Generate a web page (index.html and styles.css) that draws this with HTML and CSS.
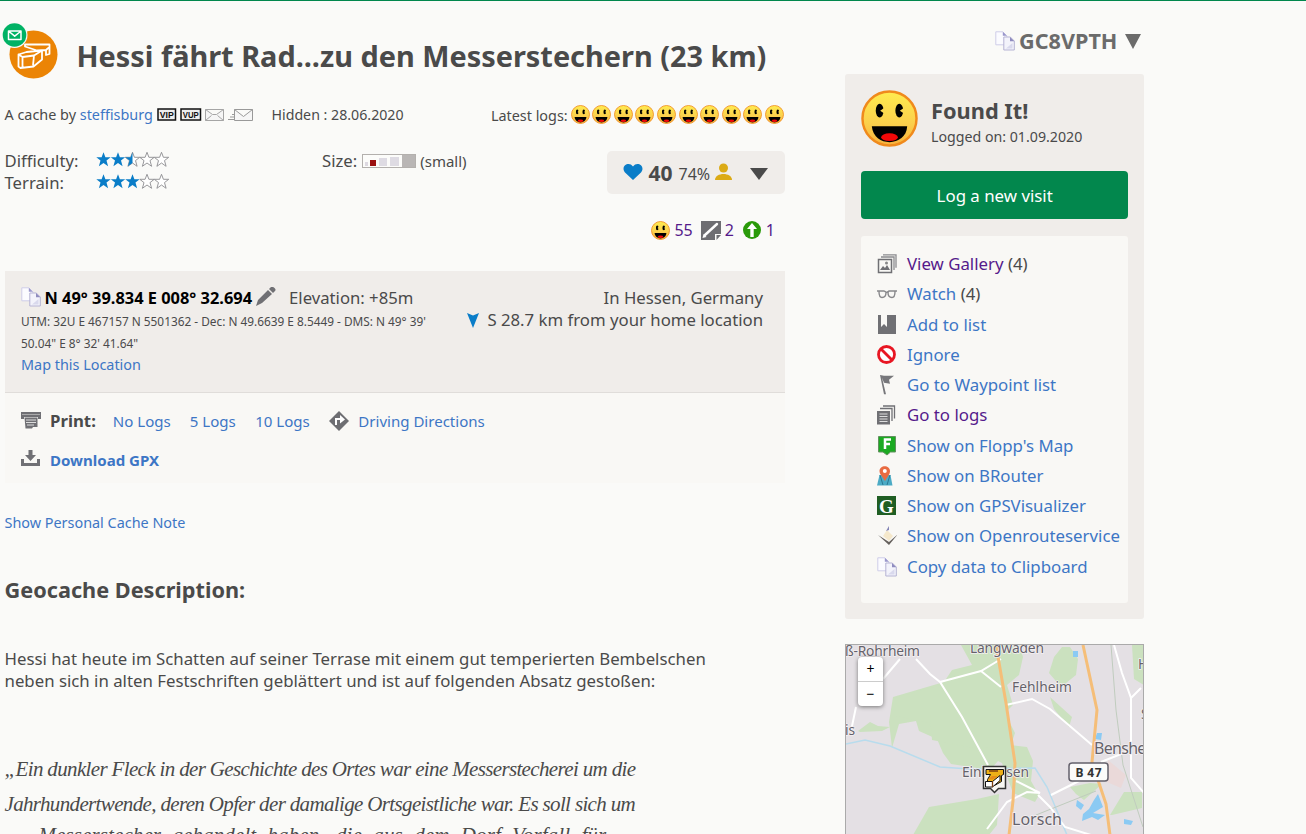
FILE: index.html
```html
<!DOCTYPE html>
<html lang="en">
<head>
<meta charset="utf-8">
<title>Geocache GC8VPTH</title>
<link rel="stylesheet" href="styles.css">
</head>
<body>
<svg class="defs" width="0" height="0">
  <defs>
    <linearGradient id="face" x2="0" y2="1"><stop offset="0" stop-color="#ffec4f"/><stop offset=".6" stop-color="#fbcf4c"/><stop offset="1" stop-color="#f9b23c"/></linearGradient>
    <symbol id="smile" viewBox="0 0 58 58"><circle cx="29" cy="29" r="27.5" fill="url(#face)" stroke="#f08a1c" stroke-width="2.5"/><ellipse cx="19" cy="21" rx="4" ry="7"/><ellipse cx="39" cy="21" rx="4" ry="7"/><path d="M19.500 21l5-3.500v7zM39.500 21l5-3.500v7z" fill="#fcd950"/><path d="M11 37h36c-1 21-34 22-36 0z"/><ellipse cx="29" cy="48" rx="8.500" ry="4" fill="#f20808"/></symbol>
    <symbol id="star" viewBox="0 0 15 15"><path d="M7.500 .3l1.900 5h5.300l-4.200 3.300 1.600 5.700-4.600-3.300-4.600 3.300 1.600-5.700L.3 5.300h5.300z"/></symbol>
    <symbol id="copy" viewBox="0 0 20 20"><path d="M.8.8h7l4 4v9h-11z" fill="#fbfbff" stroke="#cfcee8"/><path d="M7.800.8v4h4z" fill="#9a97cb"/><path d="M8.800 6h6.500l4 4v9H8.800z" fill="#f3f3fb" stroke="#b5b3d3"/><path d="M15 6v4.300h4.300z" fill="#8f8cbf"/><path d="M11 17.500h6.500V12z" fill="#d9d9ed"/></symbol>
  </defs>
</svg>
<div class="page">
<main class="main">
  <header class="head">
    <svg class="type-icon" width="58" height="58" viewBox="0 0 58 58">
      <circle cx="33.500" cy="31.500" r="24" fill="#eb8405"/>
      <path d="M18.500 31.500l4 2.500 11.500-1.500 8-5v9l-8.500 7-13 1.500-2-1.500zM22.500 34v10M34 32.500l-1 10M18.500 31.500l8-2.500 15.500-1.500M25 21.500h24.500v9.500l-3.500 1v-5l-9 .500-12-4zM46 27l3.500-3" fill="none" stroke="#fff" stroke-width="1.800" stroke-linejoin="round"/>
      <circle cx="14.500" cy="12" r="13" fill="#fafaf8"/><circle cx="14.500" cy="12" r="11.800" fill="#00b265"/>
      <path d="M8.500 8h12.500v8.500H8.500zM9 8.500l5.700 4.700L20.500 8.500" fill="none" stroke="#fff" stroke-width="1.500" stroke-linejoin="round"/>
    </svg>
    <h1>Hessi fährt Rad...zu den Messerstechern (23 km)</h1>
  </header>
  <div class="byline">
    <span class="by">A cache by <a>steffisburg</a></span>
    <svg class="mails" width="97" height="14" viewBox="0 0 97 14">
      <rect x="1" y="1" width="17.500" height="11" fill="#eee" stroke="#111" stroke-width="1.500"/>
      <text x="9.700" y="10" class="vip" textLength="14" lengthAdjust="spacingAndGlyphs">VIP</text>
      <rect x="24" y="1" width="19.500" height="11" fill="#eee" stroke="#111" stroke-width="1.500"/>
      <text x="33.700" y="10" class="vip" textLength="16" lengthAdjust="spacingAndGlyphs">VUP</text>
      <path d="M48.500 1.500h18v11h-18zl7 5h4l7-5M48.500 12.500l6-5M66.500 12.500l-6-5" fill="#f6f6f6" stroke="#a5a5a5"/>
      <path d="M77.500 1.500h18v11h-18zl9 7 9-7" fill="#f6f6f6" stroke="#999"/><path d="M75 6.500h3M73 9h5M71 11.500h6" stroke="#999"/>
    </svg>
    <span class="hidden-on">Hidden : 28.06.2020</span>
    <span class="latest">Latest logs:</span>
    <span class="smiles">
      <svg><use href="#smile"/></svg><svg><use href="#smile"/></svg><svg><use href="#smile"/></svg><svg><use href="#smile"/></svg><svg><use href="#smile"/></svg><svg><use href="#smile"/></svg><svg><use href="#smile"/></svg><svg><use href="#smile"/></svg><svg><use href="#smile"/></svg><svg><use href="#smile"/></svg>
    </span>
  </div>
  <div class="facts">
    <dl class="ratings">
      <dt>Difficulty:</dt>
      <dd><svg width="73" height="15" viewBox="0 0 73 15"><g class="on"><use href="#star" width="15" height="15"/><use href="#star" x="14.500" width="15" height="15"/></g><use class="off" href="#star" x="29" width="15" height="15"/><path class="on" d="M36.500.3v10.700l-4.600 3.300 1.600-5.700-4.200-3.300h5.300z"/><g class="off"><use href="#star" x="43.500" width="15" height="15"/><use href="#star" x="58" width="15" height="15"/></g></svg></dd>
      <dt>Terrain:</dt>
      <dd><svg width="73" height="15" viewBox="0 0 73 15"><g class="on"><use href="#star" width="15" height="15"/><use href="#star" x="14.500" width="15" height="15"/><use href="#star" x="29" width="15" height="15"/></g><g class="off"><use href="#star" x="43.500" width="15" height="15"/><use href="#star" x="58" width="15" height="15"/></g></svg></dd>
    </dl>
    <div class="size"><span>Size:</span>
      <svg width="54" height="14" viewBox="0 0 54 14"><rect x=".5" y=".5" width="53" height="13" fill="#fcfcfa" stroke="#b3b0ad"/><rect x="3" y="8" width="3" height="4" fill="#ddd9e1"/><rect x="8" y="6" width="6" height="6" fill="#9b1010"/><rect x="17" y="4" width="8" height="8" fill="#dedbe3"/><rect x="28" y="3" width="9" height="9" fill="#dedbe3"/><rect x="40" y="1" width="13" height="12" fill="#b9b6b5"/></svg>
      <span class="small">(small)</span></div>
    <div class="fav">
      <svg class="heart" width="20" height="18" viewBox="0 0 20 18"><path d="M10 17L2 9.500C-3 3 6-2.500 10 3.500 14-2.500 23 3 18 9.500z" fill="#0a7dc8"/></svg>
      <b>40</b><span class="pct">74%</span>
      <svg class="person" width="17" height="18" viewBox="0 0 17 18"><circle cx="8.500" cy="5" r="4.500" fill="#dcab16"/><path d="M0 17c0-8 17-8 17 0z" fill="#dcab16"/></svg>
      <svg class="arrow" width="18" height="12" viewBox="0 0 18 12"><path d="M0 0h18l-9 12z" fill="#4a4a4a"/></svg>
    </div>
  </div>
  <div class="counts">
    <svg width="19" height="19"><use href="#smile"/></svg><a>55</a>
    <svg class="note" width="20" height="19" viewBox="0 0 20 19"><path d="M0 0h20v13h-6v6H0z" fill="#6e6e72"/><path d="M4 14L16 3" stroke="#fff" stroke-width="2.400" stroke-linecap="round"/><path d="M1.500 17l1-4 3 3z" fill="#fff"/><path d="M15.500 14H20l-4.500 5z" fill="#6e6e72"/></svg><a>2</a>
    <svg class="up" width="18" height="18" viewBox="0 0 18 18"><circle cx="9" cy="9" r="9" fill="#2a9a0a"/><path d="M9 2l5 6h-3.300v8H7.300V8H4z" fill="#fff"/></svg><a>1</a>
  </div>

  <section class="coords">
    <div class="coords-left">
      <div class="coord-line"><svg width="20" height="20"><use href="#copy"/></svg><b>N 49° 39.834 E 008° 32.694</b>
        <svg class="pencil" width="20" height="19" viewBox="0 0 20 19"><path d="M0 19l2-6L12 3l4 4L6 16zM13 2l2-2c2-1 6 2 4 4l-2 2z" fill="#707074"/></svg>
        <span class="elev">Elevation: +85m</span></div>
      <p class="utm">UTM: 32U E 467157 N 5501362 - Dec: N 49.6639 E 8.5449 - DMS: N 49° 39'<br>50.04" E 8° 32' 41.64"</p>
      <a class="maplink">Map this Location</a>
    </div>
    <div class="coords-right"><p>In Hessen, Germany</p><p><svg width="12" height="16" viewBox="0 0 12 16"><path d="M0 1l6 2.500L12 1 6 16z" fill="#0a7dc8"/></svg>S 28.7 km from your home location</p></div>
  </section>
  <section class="print">
    <div class="print-row">
      <svg class="ic" width="20" height="17" viewBox="0 0 20 17"><path d="M0 0h20v7h-3V5H3v2H0z" fill="#707074"/><path d="M1 2.500h18" stroke="#aaa"/><path d="M3.500 5.500h13V15H12l-1 1.500H4.500z" fill="#707074"/><path d="M5 8h10M5 10.500h10M6 13h7" stroke="#ddd"/></svg>
      <b>Print:</b><a class="p1">No Logs</a><a class="p2">5 Logs</a><a class="p3">10 Logs</a>
      <svg class="drive" width="20" height="20" viewBox="0 0 20 20"><path d="M10 0l10 10-10 10L0 10z" fill="#6e6e72"/><path d="M7 14V8h6" fill="none" stroke="#fff" stroke-width="2"/><path d="M11 4l5 4.500-5 4z" fill="#fff"/></svg><a class="p4">Driving Directions</a>
    </div>
    <div class="print-row">
      <svg class="ic dl" width="20" height="16" viewBox="0 0 20 16"><path d="M0 9h3v4h13V9h3v7H0z" fill="#707074"/><path d="M7.500 0h4v5h3.500l-5.500 6L4 5h3.500z" fill="#707074"/></svg>
      <a class="gpx">Download GPX</a>
    </div>
  </section>
  <a class="note-link">Show Personal Cache Note</a>
  <h2>Geocache Description:</h2>
  <p class="desc">Hessi hat heute im Schatten auf seiner Terrase mit einem gut temperierten Bembelschen<br>neben sich in alten Festschriften geblättert und ist auf folgenden Absatz gestoßen:</p>
  <div class="quote"><p class="q1">„Ein dunkler Fleck in der Geschichte des Ortes war eine Messerstecherei um die</p><p class="q2">Jahrhundertwende, deren Opfer der damalige Ortsgeistliche war. Es soll sich um</p><p class="q3">Messerstecher gehandelt haben, die aus dem Dorf Vorfall für</p></div>
</main>

<aside class="side">
  <div class="code"><svg width="20" height="20"><use href="#copy"/></svg><b>GC8VPTH</b><svg class="codearrow" width="16" height="15" viewBox="0 0 16 15"><path d="M0 0h16L8 15z" fill="#6b6b6b"/></svg></div>
  <div class="panel">
    <div class="found"><svg width="57" height="57"><use href="#smile"/></svg><div><strong>Found It!</strong><span>Logged on: 01.09.2020</span></div></div>
    <a class="button">Log a new visit</a>
    <ul class="actions">
      <li><svg viewBox="0 0 20 20"><path d="M1.500 5.500h13v13h-13z" fill="none" stroke="#707074" stroke-width="1.500"/><path d="M4 3h13v13M6 .800h13v13" fill="none" stroke="#8b8b8e" stroke-width="1.300"/><path d="M3 16l3-4 2 2 2-3 3 5z" fill="#707074"/><circle cx="9.500" cy="9" r="1.500" fill="#888"/></svg><span><a class="seen">View Gallery</a> (4)</span></li>
      <li><svg viewBox="0 0 20 20"><path d="M0 7h7l2.500 1.500L12 7h8M2 7.500c0 4 1 6 3 6 3 0 4-2 4-5 0-2-7-2-7-1zM11 8.500c0 3 1 5 4 5 2 0 3-2 3-6 0-1-7-1-7 1z" fill="none" stroke="#88888b" stroke-width="1.400"/></svg><span><a>Watch</a> (4)</span></li>
      <li><svg viewBox="0 0 20 20"><path d="M1 0h3v12l3-3 3 3V0h9v19H1z" fill="#707074"/></svg><a>Add to list</a></li>
      <li><svg viewBox="0 0 20 20"><circle cx="9.500" cy="9.500" r="8" fill="#fff" stroke="#e81622" stroke-width="2.800"/><path d="M4 4l11 11" stroke="#e81622" stroke-width="2.800"/></svg><a>Ignore</a></li>
      <li><svg viewBox="0 0 20 20"><path d="M3 0l4 .800h10l-5 4 1 4-6-1-2-5 4 16.500H7z" fill="#77777a"/></svg><a>Go to Waypoint list</a></li>
      <li><svg viewBox="0 0 20 20"><path d="M0 6h13v13.500H0z" fill="#707074"/><path d="M3 3.500h12v12.500M6 1h11.500v12.500" fill="none" stroke="#707074" stroke-width="1.300"/><path d="M2.500 9h8M2.500 11.500h8M2.500 14h8M2.500 16.500h8" stroke="#ddd"/></svg><a class="seen">Go to logs</a></li>
      <li><svg viewBox="0 0 20 20"><path d="M1.500.5h17v15.500h-5l-3.500 3-4-3H1.500z" fill="#1caa22" stroke="#63905f"/><path d="M8 13V3.500h6M8 8h5" fill="none" stroke="#fff" stroke-width="2.500"/></svg><a>Show on Flopp's Map</a></li>
      <li><svg viewBox="0 0 20 20"><path d="M2.500 9h11l2 10.500H0z" fill="#4cabc5"/><path d="M3 9l3 10M13 9l-3 10" stroke="#2b7893"/><path d="M8 15C5 10 2.500 8 2.500 5c0-6.500 10.500-6.500 10.500 0 0 3-2 5-5 10z" fill="#e86b42"/><circle cx="7.800" cy="5" r="2" fill="#fff"/></svg><a>Show on BRouter</a></li>
      <li><svg viewBox="0 0 20 20"><rect width="19" height="19" fill="#205e23"/><text x="9.500" y="16.500" class="gletter">G</text></svg><a>Show on GPSVisualizer</a></li>
      <li><svg viewBox="0 0 20 20"><path d="M1 9l11 7 9-8-9 11z" fill="#66615d"/><path d="M6 10l4-6 6 6-4 5z" fill="#f5e8cb"/><path d="M9 5l3-5v4z" fill="#8484b5"/></svg><a>Show on Openrouteservice</a></li>
      <li><svg viewBox="0 0 20 20"><use href="#copy" width="20" height="20"/></svg><a>Copy data to Clipboard</a></li>
    </ul>
  </div>
  <div class="map">
    <svg width="298" height="190" viewBox="0 0 298 190">
      <rect width="298" height="190" fill="#e4e0e4"/>
      <g fill="#cbe1bf">
        <path d="M47 52l51-15 8-12 20-5-11-20h58l4 12-4 18-12 10 6 20-8 8 10 20-4 12 16 2 6 14-2 20 8 14-4 7-22-9-11-30-4-2-8 9-39-6-8-11-6-14-18-8-3-10-17 3-7 24-3-26z"/>
        <path d="M208 12l8-10h8l8 12-2 16-15 12-12-14zM286 0h12v40l-10-6zM204 52l22 20-3 10-15-18zM12 86l12-9 8 4 12 1-8 4-22 1zM67 190l16-28 48-8 22-5-2 31-8 10zM224 142l20-4 12 1-18 16-8-6zM264 170l14-23h18v16l-30 7z"/>
        <path d="M100 56l60 0 6 48-30 0-20-8-14-20zM50 53l48-14 14 26-24 14-38-8z"/>
        <path d="M84 70h20l40 32-12 2-46-9z"/>
      </g>
      <path d="M262 115l18 15-5 13-14-6z" fill="#ead9d9"/>
      <g fill="#8bcaf3"><path d="M227 6h5v6h-5zM251 88h5l-1 7-6-1zM252 149l5 13-10 6 12 2-7 5-6-3-10 4 1-7 6-5 5-9zM231 155l7 5-3 5-5-4zM278 174l9 2-2 4-7-1z"/></g>
      <path d="M0 99l19-4 25 6 50 21 30 2 65-1 12 19 20 48" fill="none" stroke="#b8dced" stroke-width="1.500"/>
      <path d="M265 0l5 65 7 55 20 62M190 170l60-24" fill="none" stroke="#c0ccbe"/>
      <g fill="none" stroke="#fff" stroke-width="2"><path d="M70 14l14 15 10 8 22 35 26 48M94 37l41-11 20-12M135 26l20 16M160 60l26-6 18 10 42 36M268 0l8 28 9 25v80l13 15M285 53l10-10M285 105l-30 12M170 136l24 12-13-1-20 10-20 27M205 150l30-15M192 150l12 12 15 20 26 8M54 14L37 34M10 62L5 86"/></g>
      <path d="M150 0l10 58 9 60-2 38-4 34M237 0l14 65-5 52 14 42 4 31" fill="none" stroke="#f5be78" stroke-width="3"/>
      <g class="label"><text x="-1" y="11" textLength="75">ß-Rohrheim</text><text x="124" y="8" textLength="74">Langwaden</text><text x="166" y="47" textLength="60">Fehlheim</text><text x="248" y="109" class="town" textLength="70">Bensheim</text><text x="116" y="132" textLength="67">Einhausen</text><text x="166" y="180" class="town" textLength="50">Lorsch</text><text x="-1" y="90">is</text><text x="292" y="24">H</text><text x="295" y="74">S</text></g>
      <rect x="223" y="118" width="39" height="18" rx="3" fill="#fbfbfa" stroke="#63606b" stroke-width="1.500"/><text x="242.500" y="132" class="road" textLength="26">B 47</text>
      <path d="M137.500 121.500h22v22h-7l-4 4-4-4h-7z" fill="#f8f7f3" stroke="#333" stroke-width="1.500"/>
      <path d="M140 124.500h17.500v5l-2 1v6l-7 4h-7v-6l3-5h-4.500z" fill="#edb017" stroke="#111"/><path d="M139.500 136.500h7l7.500-6v5l-7.500 6.500h-7z" fill="#fff" stroke="#111"/><path d="M146.500 136.500v5.500M143 126h9" stroke="#7a3d10" stroke-width="1.300"/><path d="M142 134.500l4-3.500h6l-5 3.500z" fill="#e58b1a"/>
    </svg>
    <div class="zoomer"><span>+</span><span>−</span></div>
  </div>
</aside>
</div>
</body>
</html>
```
FILE: styles.css
```css
* { box-sizing: border-box; }
body { margin: 0; background: #fafaf8; color: #4a4a4a; font: 16px/22px "Noto Sans", sans-serif; overflow: hidden; height: 834px; }
h1, h2, p, dl, dd, ul { margin: 0; padding: 0; }
svg { display: block; flex: none; }
.defs { position: absolute; }
a { color: #3d76c5; }
.page { display: flex; height: 834px; border-top: 1px solid #00874d; overflow: hidden; white-space: nowrap; }
.main { width: 784.5px; padding-left: 4.500px; margin-right: 60.500px; flex: none; }
.head { display: flex; height: 80px; margin: 15px 0 0 -4.500px; align-items: center; }
.type-icon { margin: -9px 18.500px 0 0; }
h1 { font-size: 28.880px; line-height: 40px; }
.byline { display: flex; height: 22px; margin-top: 8px; align-items: center; font-size: 14.400px; }
.by { width: 152px; }
.mails { margin-top: -1px; }
.hidden-on { margin-left: 18px; font-size: 14.200px; }
.latest { margin-left: auto; margin-right: 3px; padding-top: 1px; }
.smiles { display: flex; gap: 2.600px; margin: -1px .500px 0 0; }
.smiles svg { width: 19px; height: 19px; }
.vip { font: bold 8.500px "Liberation Sans", sans-serif; text-anchor: middle; fill: #111; }
.facts { display: flex; margin-top: 24px; height: 53px; }
.ratings { display: grid; grid-template-columns: 91px 75px; grid-auto-rows: 22px; width: 317.5px; font-size: 16.700px; }
.ratings dd { padding-top: 2px; }
.on { fill: #0a7dc8; }
.off { fill: #fff; stroke: #8b8b8e; stroke-width: .900px; }
.size { display: flex; align-items: center; height: 22px; gap: 5px; font-size: 16.700px; }
.size svg { margin-top: -1px; }
.size .small { font-size: 15px; margin-left: -1px; }
.fav { display: flex; width: 178px; height: 43px; margin: 1px 0 0 auto; padding: 0 16px; align-items: center; background: #f0edea; border-radius: 5px; }
.fav b { font-size: 21px; margin-left: 6px; }
.heart { margin-top: -2px; }
.pct { margin-left: 6px; padding-top: 3px; }
.person { margin: -1px 0 0 5px; }
.arrow { margin: 3px 0 0 18px; }
.counts { display: flex; align-items: center; justify-content: flex-end; height: 22px; margin-top: 16px; padding-right: 9.500px; }
.counts a, .seen { color: #551a8b; }
.counts a { margin-left: 4px; }
.note { margin-left: 8px; }
.up { margin-left: 9px; }
.counts .up + a { margin-left: 5px; }
.coords { display: flex; justify-content: space-between; height: 122px; margin-top: 30px; padding: 16px 21.500px 0 16.500px; background: #f0edea; border-bottom: 1px solid #e0ddda; }
.coord-line { display: flex; height: 22px; align-items: center; }
.coord-line svg { margin-top: -3px; }
.coord-line b { color: #000; margin-left: 3.500px; font-size: 16.400px; }
.coord-line .pencil { margin-left: 4px; }
.elev { margin-left: 13px; font-size: 16.700px; }
.utm { font-size: 11.830px; margin-top: 1px; }
.maplink { display: block; font-size: 14.400px; }
.coords-right { text-align: right; font-size: 16.750px; }
.coords-right p { display: flex; justify-content: flex-end; align-items: center; gap: 8px; }
.print { height: 90px; padding: 8px 16px 0; background: #f9f8f5; }
.print-row { display: flex; height: 39px; align-items: center; font-size: 15.050px; }
.print-row b { font-size: 16.800px; margin-left: 9.500px; }
.p1 { margin-left: 17px; } .p2 { margin-left: 19px; } .p3 { margin-left: 19.500px; } .p4 { margin-left: 9px; }
.drive { margin-left: 19.500px; }
.dl { margin-top: -3px; }
.print-row .gpx { font-weight: bold; margin-left: 9.500px; }
.note-link { display: block; font-size: 14.400px; margin-top: 29px; }
h2 { font-size: 21.700px; line-height: 30px; margin-top: 40.500px; }
.desc { margin-top: 43.500px; font-size: 16.810px; }
.quote { font: italic 21px/35px "Liberation Serif", serif; margin-top: 60px; letter-spacing: -.650px; }
.q3 { margin-top: -4px; padding-left: 34px; letter-spacing: .100px; word-spacing: 6px; }
.side { width: 299.400px; flex: none; }
.code { display: flex; height: 73px; align-items: center; justify-content: flex-end; color: #6b6b6b; font-size: 21.600px; padding: 7px 3px 0 0; }
.code b { margin-left: 4px; }
.codearrow { margin-left: 8px; }
.panel { height: 545px; padding: 16px; background: #f0edea; border-radius: 3px; }
.found { display: flex; height: 58px; }
.found div { display: flex; flex-direction: column; margin-left: 13px; }
.found strong { font-size: 21.800px; line-height: 30px; margin-top: 6px; }
.found span { font-size: 14.200px; line-height: 22px; }
.button { display: flex; height: 48px; margin-top: 23px; align-items: center; justify-content: center; border-radius: 4px; background: #02874d; color: #fff; padding-top: 2px; font-size: 16.850px; }
.actions { list-style: none; height: 367px; margin-top: 17px; padding: 13px 16px; background: #f9f8f5; border-radius: 3px; font-size: 16.820px; }
.actions li { display: flex; height: 30.250px; align-items: center; }
.actions svg { width: 20px; height: 20px; margin-right: 10px; }
.gletter { font: bold 19px "Liberation Serif", serif; fill: #fff; text-anchor: middle; }
.map { position: relative; height: 192px; margin-top: 25px; border: 1px solid #aaa; overflow: hidden; }
.label { font-size: 13.800px; fill: #65626a; stroke: #f4f1f3; stroke-width: 1.500px; paint-order: stroke; }
.town { font-size: 16px; }
.road { font: bold 12px "Noto Sans", sans-serif; text-anchor: middle; fill: #333; }
.zoomer { position: absolute; left: 12px; top: 12px; width: 25px; height: 49px; border-radius: 4px; background: #fff; box-shadow: 0 1px 4px #777; color: #000; font-size: 14px; text-align: center; line-height: 24px; }
.zoomer span { display: block; height: 24px; }
.zoomer span + span { border-top: 1px solid #ccc; }
```
